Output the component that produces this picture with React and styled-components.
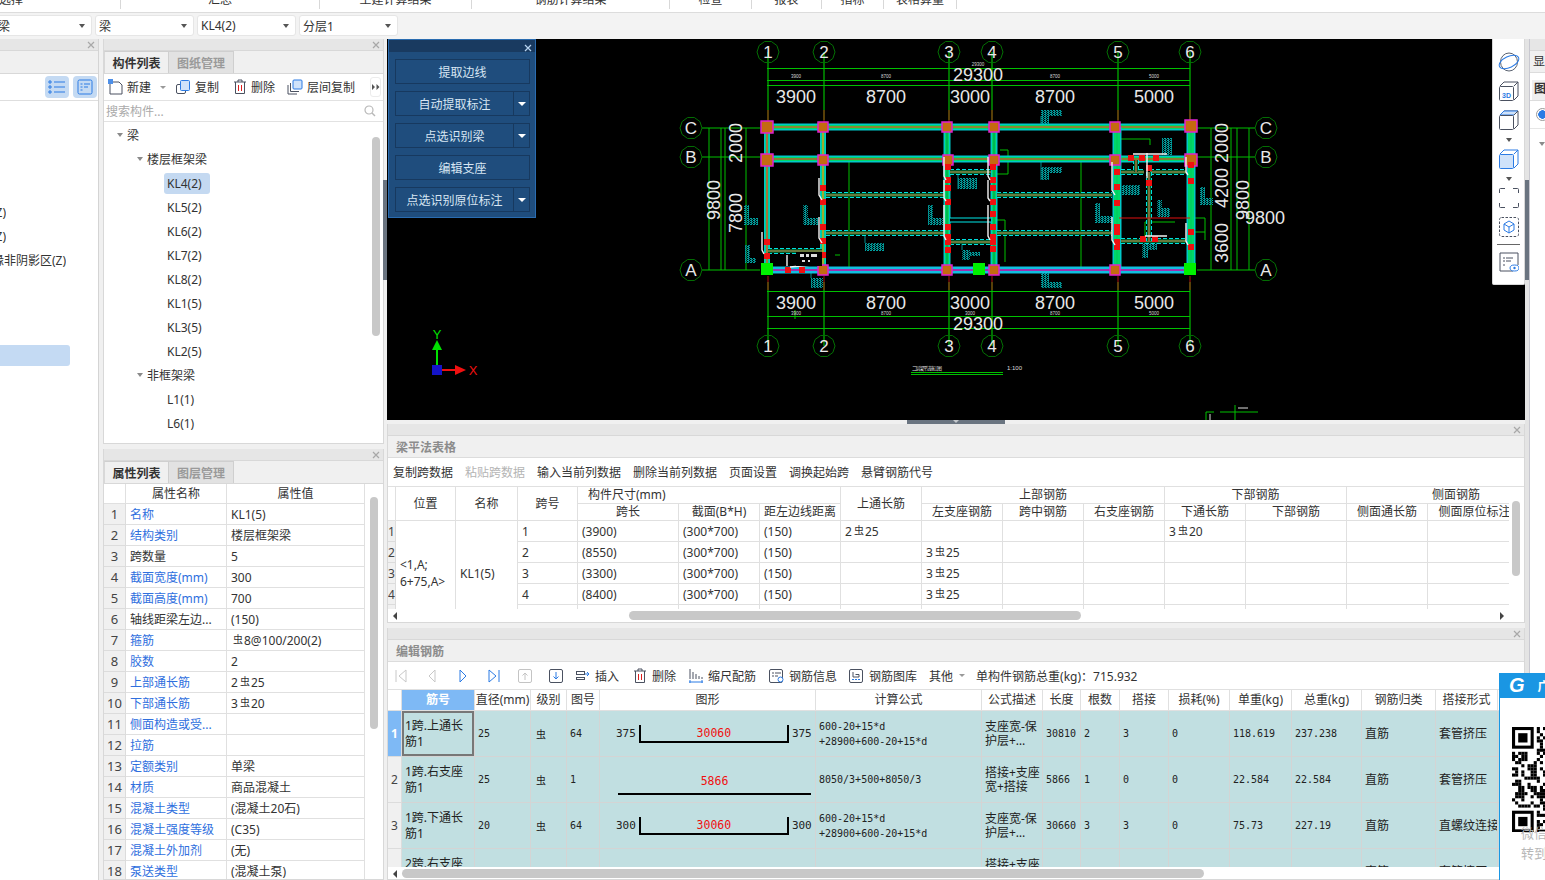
import React from "react";
import styled, { createGlobalStyle } from "styled-components";

const GlobalStyle = createGlobalStyle`
  html, body {
    margin: 0;
    padding: 0;
    background: #f0f0f0;
    overflow: hidden;
  }
  body {
    font-family: "Noto Sans", "Noto Sans CJK SC", sans-serif;
    font-size: 12px;
    color: #333;
  }
  * { box-sizing: border-box; }
`;

const MONO = `"DejaVu Sans Mono", "Noto Sans CJK SC", monospace`;

/* ---------- tiny drawings ---------- */
const CloseX = ({ c = "#a8a8a8" }) => (
  <svg width="8" height="8" viewBox="0 0 8 8">
    <path d="M1 1l6 6M7 1L1 7" stroke={c} strokeWidth="1.2" fill="none" />
  </svg>
);
const Ico = ({ children, w = 16, h = 16 }) => (
  <svg width={w} height={h} viewBox={`0 0 ${w} ${h}`} fill="none">
    {children}
  </svg>
);
const NewIcon = () => (
  <Ico>
    <path d="M3 3h8l3 3v9H2V5" stroke="#4a5160" strokeWidth="1" />
    <rect x="0" y="0" width="5" height="5" fill="#4d8fe8" />
  </Ico>
);
const CopyIcon = () => (
  <Ico>
    <rect x="1.5" y="5.5" width="9" height="9" rx="1.5" stroke="#4a5160" />
    <rect x="5.5" y="1.5" width="9" height="10" rx="1" fill="#cfe2fa" stroke="#2b7be4" />
  </Ico>
);
const TrashIcon = () => (
  <Ico w={14}>
    <path d="M1 3h12M5 3V1h4v2M2.5 3v11.5h9V3" stroke="#4a5160" />
    <path d="M5.5 6v6M8.5 6v6" stroke="#e02020" />
  </Ico>
);
const LayerCopyIcon = () => (
  <Ico>
    <path d="M1 6v9h9M3.5 4v8.5H12" stroke="#4a5160" />
    <rect x="6" y="1" width="9" height="9" rx="1" fill="#cfe2fa" stroke="#2b7be4" />
  </Ico>
);
const ListIcon = () => (
  <Ico w={18} h={14}>
    <path d="M6 2h11M6 7h11M6 12h11" stroke="#2b7be4" />
    <path d="M1 1h2v2H1zM1 6h2v2H1zM1 11h2v2H1z" stroke="#2b7be4" />
  </Ico>
);
const FormIcon = () => (
  <Ico w={16} h={16}>
    <rect x="1" y="1" width="14" height="14" rx="1.5" stroke="#2b7be4" />
    <path d="M3.5 5h2M7 5h6M3.5 8h2M7 8h4M3.5 11h2" stroke="#2b7be4" />
  </Ico>
);
const SearchIcon = () => (
  <Ico w={12} h={12}>
    <circle cx="5" cy="5" r="4" stroke="#b8b8b8" strokeWidth="1.2" />
    <path d="M8 8l3 3" stroke="#b8b8b8" strokeWidth="1.4" />
  </Ico>
);
const MoreIcon = () => (
  <Ico w={8} h={6}>
    <path d="M0 0l3 3-3 3zM4.5 0l3 3-3 3z" fill="#555" />
  </Ico>
);

const NavFirst = ({ c }) => (
  <Ico w={14}>
    <path d="M2 2v12M12 2L5 8l7 6z" stroke={c} />
  </Ico>
);
const NavPrev = ({ c }) => (
  <Ico w={14}>
    <path d="M10 2L4 8l6 6z" stroke={c} />
  </Ico>
);
const NavNext = ({ c }) => (
  <Ico w={14}>
    <path d="M4 2l6 6-6 6z" stroke={c} />
  </Ico>
);
const NavLast = ({ c }) => (
  <Ico w={14}>
    <path d="M12 2v12M2 2l7 6-7 6z" stroke={c} />
  </Ico>
);
const BoxArrow = ({ c, up }) => (
  <Ico w={14}>
    <rect x="0.5" y="1.5" width="13" height="13" rx="1.5" stroke={up ? "#c4c4c4" : "#4a5160"} />
    <path d={up ? "M7 12V5M4.5 7.5L7 5l2.5 2.5" : "M7 4v7M4.5 8.5L7 11l2.5-2.5"} stroke={c} />
  </Ico>
);
const InsertIcon = () => (
  <Ico w={14}>
    <rect x="0.5" y="3.5" width="8" height="3" stroke="#4a5160" />
    <rect x="0.5" y="9.5" width="8" height="2" stroke="#4a5160" />
    <path d="M9 6h4M11 4l2 2-2 2" stroke="#2b7be4" />
  </Ico>
);
const ScaleIcon = () => (
  <Ico w={14}>
    <path d="M1 1v10M4 4v7M7 6v5M10 8v3M13 9v2" stroke="#4a5160" />
    <path d="M0 14h14M1 12v3M13 12v3" stroke="#2b7be4" />
  </Ico>
);
const InfoIcon = () => (
  <Ico w={15}>
    <rect x="0.5" y="1.5" width="13" height="13" rx="1.5" stroke="#4a5160" />
    <path d="M3 5h2M6 5h6M3 8h2M6 8h3" stroke="#4a5160" />
    <circle cx="11.5" cy="11.5" r="2.5" fill="#fff" stroke="#2b7be4" />
  </Ico>
);
const LibIcon = () => (
  <Ico w={15}>
    <rect x="0.5" y="1.5" width="13" height="13" rx="1.5" stroke="#4a5160" />
    <path d="M4 4v5h6V6.5H6.5" stroke="#4a5160" />
    <path d="M3 11.5h8" stroke="#2b7be4" strokeDasharray="2 1" />
  </Ico>
);

/* ---------- shell ---------- */
const Page = styled.div`
  position: relative;
  width: 1545px;
  height: 880px;
  overflow: hidden;
  display: flex;
  flex-direction: column;
  background: #f0f0f0;
`;
const TopNav = styled.div`
  height: 13px;
  display: flex;
  background: #fff;
  border-bottom: 1px solid #dcdcdc;
  overflow: hidden;
`;
const NavTab = styled.div`
  width: ${(p) => p.$w}px;
  flex: none;
  height: 9px;
  padding-right: ${(p) => p.$pr ?? 0}px;
  border-right: 1px solid #d8d8d8;
  display: flex;
  justify-content: center;
  overflow: hidden;
  span {
    display: block;
    margin-top: -7px;
    line-height: 14px;
    white-space: nowrap;
  }
`;
const SelectBar = styled.div`
  height: 26px;
  display: flex;
  gap: 3px;
  padding-top: 2px;
  background: #f3f3f3;
`;
const Select = styled.div`
  width: ${(p) => p.$w}px;
  height: 21px;
  margin-left: ${(p) => p.$ml ?? 0}px;
  padding: 0 6px 0 3px;
  display: flex;
  align-items: center;
  justify-content: space-between;
  background: #fff;
  border: 1px solid #e6e6e6;
  border-radius: 3px;
  font-size: 12px;
  &::after {
    content: "";
    border-top: 4px solid #555;
    border-left: 3px solid transparent;
    border-right: 3px solid transparent;
  }
`;
const Work = styled.div`
  flex: 1;
  min-height: 0;
  display: flex;
`;
const LeftPanel = styled.div`
  width: 99px;
  flex: none;
  margin-right: 4px;
  display: flex;
  flex-direction: column;
  background: #fff;
  border-right: 1px solid #d4d4d4;
`;
const MidColumn = styled.div`
  width: 281px;
  flex: none;
  margin-right: 3px;
  display: flex;
  flex-direction: column;
  gap: 5px;
`;
const Panel = styled.div`
  display: flex;
  flex-direction: column;
  margin-top: ${(p) => p.$mt ?? 0}px;
  background: #fff;
  border: 1px solid #d8d8d8;
  border-top: none;
  overflow: hidden;
  height: ${(p) => p.$h}px;
  flex: ${(p) => (p.$h ? "none" : "1")};
`;
const PanelHead = styled.div`
  height: 12px;
  flex: none;
  display: flex;
  align-items: center;
  justify-content: flex-end;
  padding-right: 3px;
  background: #e6e6e6;
  border-bottom: 1px solid #d8d8d8;
`;
const TabStrip = styled.div`
  height: 23px;
  flex: none;
  display: flex;
  background: #f0f0f0;
  border-bottom: 1px solid #d8d8d8;
`;
const Tab = styled.div`
  width: 65px;
  display: flex;
  align-items: center;
  justify-content: center;
  font-weight: 700;
  color: ${(p) => (p.$active ? "#333" : "#9a9a9a")};
  background: ${(p) => (p.$active ? "#f0f0f0" : "#e2e2e2")};
  border: 1px solid #cfcfcf;
  border-left: ${(p) => (p.$active ? "1px solid #d8d8d8" : "none")};
  border-bottom: none;
`;
const ListBar = styled.div`
  height: 27px;
  flex: none;
  display: flex;
  align-items: center;
  padding-left: 4px;
  background: #fff;
  border-bottom: 1px solid #e2e2e2;
`;
const Tool = styled.div`
  display: flex;
  align-items: center;
  gap: ${(p) => p.$gap ?? 4}px;
  margin-right: ${(p) => p.$mr ?? 0}px;
  white-space: nowrap;
  color: ${(p) => (p.$dim ? "#b4b4b4" : "#333")};
`;
const Caret = styled.i`
  display: block;
  margin: 0 ${(p) => p.$mr ?? 0}px 0 ${(p) => p.$ml ?? 0}px;
  border-top: 3px solid #999;
  border-left: 3px solid transparent;
  border-right: 3px solid transparent;
`;
const MoreBtn = styled.div`
  width: 11px;
  height: 20px;
  flex: none;
  margin-left: 15px;
  display: flex;
  align-items: center;
  justify-content: center;
  border: 1px solid #ececec;
  border-radius: 3px;
`;
const SearchRow = styled.div`
  height: 21px;
  flex: none;
  display: flex;
  align-items: center;
  justify-content: space-between;
  padding: 0 7px 0 2px;
  color: #aaa;
  border-bottom: 1px solid #e2e2e2;
`;
const TreeArea = styled.div`
  position: relative;
  flex: 1;
  padding-top: 1px;
  overflow: hidden;
`;
const TreeRow = styled.div`
  height: 24px;
  display: flex;
  align-items: center;
  gap: 4px;
  padding-left: ${(p) => p.$pad}px;
  white-space: nowrap;
`;
const TreeArrow = styled.i`
  display: block;
  border-top: 4px solid #8a8a8a;
  border-left: 3.5px solid transparent;
  border-right: 3.5px solid transparent;
`;
const Leaf = styled.span`
  height: 21px;
  display: flex;
  align-items: center;
  padding: 0 8px 0 3px;
  border-radius: 3px;
  background: ${(p) => (p.$on ? "#c4d9f1" : "transparent")};
`;
const VScroll = styled.div`
  position: absolute;
  top: ${(p) => p.$top}px;
  right: ${(p) => p.$right}px;
  width: 8px;
  height: ${(p) => p.$h}px;
  background: #c8c8c8;
  border-radius: 4px;
`;
const LeftButtons = styled.div`
  height: 27px;
  flex: none;
  display: flex;
  align-items: flex-end;
  justify-content: flex-end;
  gap: 4px;
  padding: 0 1px 2px 0;
  border-bottom: 1px solid #dedede;
`;
const LeftBtn = styled.div`
  width: 24px;
  height: 22px;
  display: flex;
  align-items: center;
  justify-content: center;
  background: #c4daf3;
  border-radius: 4px;
`;
const LeftList = styled.div`
  padding-top: 100px;
  display: flex;
  flex-direction: column;
`;
const LeftRow = styled.div`
  width: ${(p) => p.$w}px;
  height: 24px;
  display: flex;
  align-items: center;
  justify-content: flex-end;
  white-space: nowrap;
  overflow: hidden;
  line-height: 24px;
`;
const LeftSelected = styled.div`
  width: 70px;
  height: 21px;
  margin-top: 72px;
  background: #c4daf3;
  border-radius: 0 3px 3px 0;
`;

/* ---------- tables ---------- */
const Grid = styled.table`
  table-layout: fixed;
  width: ${(p) => p.$w}px;
  border-collapse: separate;
  border-spacing: 0;
  font-size: 12px;
`;
const Th = styled.th`
  height: ${(p) => p.$h ?? 20}px;
  padding: 0 0 0 ${(p) => p.$pl ?? 0}px;
  line-height: 14px;
  font-weight: 400;
  text-align: ${(p) => (p.$pl ? "left" : "center")};
  color: #333;
  white-space: nowrap;
  overflow: hidden;
  background: ${(p) => (p.$active ? "#7eb9f5" : "#fff")};
  ${(p) => p.$active && "color:#fff;font-weight:700;"}
  border-right: 1px solid #e0e0e0;
  border-bottom: 1px solid #e0e0e0;
`;
const Gutter = styled.td`
  padding: 0;
  text-align: center;
  overflow: hidden;
  white-space: nowrap;
  font-size: ${(p) => p.$fs ?? 12}px;
  background: ${(p) => (p.$active ? "#7eb9f5" : "#f0f0f0")};
  color: ${(p) => (p.$active ? "#fff" : "#444")};
  font-weight: ${(p) => (p.$active ? 700 : 400)};
  border-right: 1px solid #dcdcdc;
  border-bottom: 1px solid #dcdcdc;
`;
const Td = styled.td`
  height: ${(p) => p.$h ?? 21}px;
  padding: 0 3px 0 4px;
  white-space: nowrap;
  overflow: hidden;
  text-overflow: ellipsis;
  color: ${(p) => (p.$link ? "#2f6fde" : "#333")};
  border-right: 1px solid #e0e0e0;
  border-bottom: 1px solid #e0e0e0;
`;
const Bar = styled.span`
  font-size: 10px;
  position: relative;
  top: -2px;
  margin: 0 1px 0 2px;
`;
const withBar = (s) => {
  if (!s.includes("虫")) return s;
  const [a, b] = s.split("虫");
  return (
    <>
      {a}
      <Bar>虫</Bar>
      {b}
    </>
  );
};

const PropsArea = styled.div`
  position: relative;
  flex: 1;
  overflow: hidden;
`;
const TitleBar = styled.div`
  height: 22px;
  flex: none;
  display: flex;
  align-items: center;
  padding-left: 8px;
  font-weight: 700;
  color: #8c8c8c;
  background: #f0f0f0;
  border-bottom: 1px solid #dcdcdc;
`;
const TextBar = styled.div`
  height: 29px;
  flex: none;
  display: flex;
  align-items: center;
  gap: 12px;
  padding-left: 5px;
  border-bottom: 1px solid #e0e0e0;
`;
const IconBar = styled.div`
  height: 28px;
  flex: none;
  display: flex;
  align-items: center;
  padding-left: 6px;
  border-bottom: 1px solid #e0e0e0;
`;
const NavButtons = styled.div`
  display: flex;
  gap: 17px;
  margin-right: 13px;
`;
const TableClip = styled.div`
  position: relative;
  height: ${(p) => p.$h}px;
  flex: none;
  overflow: hidden;
`;
const EdgeMask = styled.div`
  position: absolute;
  top: 0;
  right: 0;
  bottom: 0;
  width: 15px;
  background: #fff;
`;
const ScrollRow = styled.div`
  height: ${(p) => p.$h}px;
  flex: none;
  display: flex;
  align-items: center;
  padding: 0 20px 0 5px;
`;
const Thumb = styled.div`
  width: ${(p) => p.$w}px;
  height: 9px;
  margin-left: ${(p) => p.$ml}px;
  margin-right: auto;
  background: #c8c8c8;
  border-radius: 4.5px;
`;
const ArrowL = styled.i`
  display: block;
  border-right: 4px solid #444;
  border-top: 4px solid transparent;
  border-bottom: 4px solid transparent;
`;
const ArrowR = styled.i`
  display: block;
  border-left: 4px solid #444;
  border-top: 4px solid transparent;
  border-bottom: 4px solid transparent;
`;
const BarCol = styled.td`
  height: 46px;
  padding: 0 3px;
  line-height: ${(p) => p.$lh ?? 16}px;
  white-space: nowrap;
  overflow: hidden;
  font-family: ${(p) => (p.$mono ? MONO : "inherit")};
  font-size: ${(p) => (p.$mono ? "10px" : "12px")};
  color: #222;
  background: #c1dfe1;
  border-right: 1px solid #d4d4d4;
  border-bottom: 1px solid #d4d4d4;
  ${(p) => p.$sel && "box-shadow: inset 0 0 0 2px #777;"}
`;
const GradeCol = styled(BarCol)`
  padding-left: 5px;
  font-size: 10px;
`;
const ShapeCell = styled.div`
  display: flex;
  align-items: center;
  gap: 3px;
  padding-left: 13px;
  font-family: ${MONO};
  font-size: 11px;
`;
const Hook = styled.div`
  width: 150px;
  height: 18px;
  margin-top: 1px;
  display: flex;
  justify-content: center;
  line-height: 16px;
  color: #f01010;
  border: 2px solid #000;
  border-top: none;
  font-size: 11.5px;
`;
const Straight = styled.div`
  width: 193px;
  height: 22px;
  margin: 8px 0 0 2px;
  text-align: center;
  line-height: 16px;
  color: #f01010;
  border-bottom: 2px solid #000;
  font-size: 11.5px;
`;

/* ---------- canvas ---------- */
const Center = styled.div`
  width: 1138px;
  flex: none;
  display: flex;
  flex-direction: column;
`;
const Canvas = styled.div`
  position: relative;
  height: 381px;
  flex: none;
  margin-bottom: 4px;
  background: #000;
  svg.cad {
    display: block;
  }
`;
const BottomHandle = styled.div`
  position: absolute;
  left: 520px;
  bottom: -4px;
  width: 98px;
  height: 4px;
  display: flex;
  justify-content: center;
  background: #6a7480;
  &::after {
    content: "";
    border-top: 3px solid #c4c8cc;
    border-left: 3px solid transparent;
    border-right: 3px solid transparent;
  }
`;
const SideHandle = styled.div`
  position: absolute;
  ${(p) => p.$side}: -4px;
  top: 141px;
  width: 4px;
  height: 100px;
  background: #6a7480;
`;
const CadPanel = styled.div`
  position: absolute;
  left: 1px;
  top: 0;
  width: 148px;
  height: 179px;
  background: #1f4d7d;
  border: 1px solid #2a6cb0;
  display: flex;
  flex-direction: column;
`;
const CadHead = styled.div`
  height: 12px;
  flex: none;
  display: flex;
  align-items: center;
  justify-content: flex-end;
  padding: 3px 3px 0 0;
  background: #193a60;
`;
const CadBody = styled.div`
  display: flex;
  flex-direction: column;
  gap: 7px;
  padding: 7px 5px 0 6px;
`;
const CadRow = styled.div`
  height: 25px;
  display: flex;
  border: 1px solid #17395f;
  color: #d8e6f3;
`;
const CadLabel = styled.div`
  flex: 1;
  display: flex;
  align-items: center;
  justify-content: center;
`;
const CadDrop = styled.div`
  width: 16px;
  display: flex;
  align-items: center;
  justify-content: center;
  border-left: 1px solid #17395f;
  &::after {
    content: "";
    border-top: 4px solid #fff;
    border-left: 4px solid transparent;
    border-right: 4px solid transparent;
  }
`;
const Rail = styled.div`
  position: absolute;
  right: 0;
  top: 0;
  width: 33px;
  height: 246px;
  display: flex;
  flex-direction: column;
  align-items: center;
  padding-top: 13px;
  background: #fff;
  border: 1px solid #d8d8d8;
  border-top: none;
  border-radius: 0 0 2px 2px;
  svg {
    flex: none;
  }
`;
const RailCaret = styled.i`
  display: block;
  flex: none;
  margin: 8px 0 7px;
  border-top: 4px solid #555;
  border-left: 3.5px solid transparent;
  border-right: 3.5px solid transparent;
`;
const RailGap = styled.div`
  height: ${(p) => p.$h}px;
  flex: none;
`;
const RailLine = styled.div`
  width: 23px;
  height: 1px;
  flex: none;
  margin: 7px 0;
  background: #666;
`;

const RightPanel = styled.div`
  flex: 1;
  display: flex;
  flex-direction: column;
  background: #fff;
  border-left: 4px solid #e4e4e4;
  box-shadow: inset 1px 0 0 #c8c8d0;
  padding-left: 1px;
  overflow: hidden;
`;
const RightTitle = styled.div`
  height: 22px;
  flex: none;
  padding: 1px 0 0 3px;
  white-space: nowrap;
  line-height: 20px;
  background: #f0f0f0;
  border-bottom: 1px solid #dcdcdc;
`;
const RightTab = styled.div`
  height: 28px;
  flex: none;
  padding: 7px 0 0 2px;
  border-bottom: 1px solid #dcdcdc;
  span {
    display: block;
    height: 20px;
    padding-left: 2px;
    line-height: 18px;
    font-weight: 700;
    white-space: nowrap;
    background: #efefef;
  }
`;
const RightRadio = styled.div`
  height: 28px;
  flex: none;
  padding: 7px 0 0 6px;
  border-bottom: 1px solid #e6e6e6;
  i {
    display: block;
    width: 13px;
    height: 13px;
    border: 1px solid #999;
    border-radius: 50%;
    background: radial-gradient(circle, #2b7be4 0 4px, transparent 4.5px);
  }
`;
const RightArrow = styled.div`
  padding: 13px 0 0 9px;
`;

/* ---------- promo ---------- */
const Promo = styled.div`
  position: absolute;
  left: 1499px;
  top: 673px;
  width: 60px;
  height: 207px;
  background: #fff;
  border-left: 1px solid #1a96e3;
  overflow: hidden;
`;
const PromoHead = styled.div`
  height: 25px;
  display: flex;
  align-items: center;
  gap: 13px;
  padding-left: 9px;
  background: #1a96e3;
  color: #fff;
  font-weight: 700;
  white-space: nowrap;
  b {
    font-family: "Liberation Sans", sans-serif;
    font-style: italic;
    font-size: 20px;
  }
`;
const QrWrap = styled.div`
  position: relative;
  padding: 29px 0 0 12px;
`;
const PromoText = styled.div`
  position: absolute;
  left: 21px;
  top: 125px;
  line-height: 20px;
  font-size: 13px;
  color: #b8b8b8;
  white-space: nowrap;
`;

/* ---------- qr ---------- */
const QR = () => {
  const n = 34;
  const m = 3.1;
  const cells = [];
  let seed = 20231;
  for (let y = 0; y < n; y++) {
    for (let x = 0; x < n; x++) {
      seed = (seed * 16807) % 2147483647;
      const inF = (x < 8 && y < 8) || (x < 8 && y > n - 9);
      if (!inF && seed % 100 < 52) cells.push(<rect key={`${x}-${y}`} x={x * m} y={y * m} width={m} height={m} fill="#000" />);
    }
  }
  const finder = (x, y) => (
    <g key={`f${y}`}>
      <rect x={x} y={y} width={7 * m} height={7 * m} fill="#000" />
      <rect x={x + m} y={y + m} width={5 * m} height={5 * m} fill="#fff" />
      <rect x={x + 2 * m} y={y + 2 * m} width={3 * m} height={3 * m} fill="#000" />
    </g>
  );
  return (
    <svg width={n * m} height={n * m}>
      {cells}
      {finder(0, 0)}
      {finder(0, (n - 7) * m)}
    </svg>
  );
};

/* ---------- cad drawing ---------- */
const AXES = [
  [768, "1"],
  [824, "2"],
  [949, "3"],
  [992, "4"],
  [1118, "5"],
  [1190, "6"],
];
const ROWS = [
  [128, "C"],
  [157, "B"],
  [270, "A"],
];
const SPANS = [
  [796, "3900"],
  [886, "8700"],
  [970, "3000"],
  [1055, "8700"],
  [1154, "5000"],
];
const BLOBS = [
  [1041, 110, 21, 6],
  [1041, 110, 8, 14],
  [803, 205, 5, 20],
  [803, 218, 15, 7],
  [865, 243, 19, 8],
  [958, 178, 19, 11],
  [928, 205, 5, 20],
  [928, 218, 15, 7],
  [962, 250, 8, 10],
  [962, 252, 18, 4],
  [1041, 167, 21, 6],
  [1041, 167, 8, 13],
  [1095, 203, 5, 20],
  [1095, 216, 17, 7],
  [1122, 185, 18, 10],
  [1157, 200, 5, 17],
  [1157, 208, 13, 9],
  [1162, 138, 10, 17],
  [1200, 187, 5, 18],
  [1200, 198, 13, 7],
  [1142, 242, 15, 8],
  [1142, 242, 6, 16],
  [744, 205, 5, 20],
  [744, 218, 14, 7],
  [745, 245, 5, 18],
  [745, 258, 11, 5],
  [811, 278, 12, 10],
  [1041, 272, 8, 16],
  [1041, 282, 21, 6],
];
const RED = [
  ...[188, 202, 227, 241, 255].map((y) => [823, y]),
  ...[167, 180, 188, 202, 227, 237, 242, 250].map((y) => [948, y]),
  ...[167, 180, 188, 202, 214, 227, 237, 242, 249].map((y) => [993, y]),
  [767, 242],
  [767, 256],
  [788, 270],
  [802, 270],
  ...[172, 187, 203, 227, 232, 242, 247].map((y) => [1117, y]),
  ...[165, 181, 232, 247].map((y) => [1191, y]),
  [1131, 158],
  [1142, 158],
  [1156, 158],
  [1143, 239],
  [1155, 239],
  [1149, 168],
  [1149, 183],
];
const COLS = [
  [767, 127, 12],
  [823, 127, 10],
  [947, 127, 10],
  [994, 127, 10],
  [1115, 127, 10],
  [1191, 126, 12],
  [767, 160, 12],
  [823, 160, 10],
  [948, 160, 10],
  [994, 160, 10],
  [1115, 160, 10],
  [1191, 160, 12],
  [823, 270, 10],
  [947, 270, 10],
  [994, 270, 10],
  [1115, 270, 10],
];
const WHITE = [
  "M819 178V195L822 200",
  "M819 217V238L822 243",
  "M944 157V176L946 180",
  "M944 180V198L946 201",
  "M944 205V236L946 240",
  "M988 157V176L990 180",
  "M988 180V198L990 201",
  "M988 205V236L990 240",
  "M762 232V250L764 254",
  "M787 255V266M790 267L812 265",
  "M1112 162V190L1115 195",
  "M1112 217V240L1115 245",
  "M1186 157V172L1188 175",
  "M1186 223V241L1188 245",
  "M1133 154H1167M1147 153V178",
  "M1145 236H1167",
];

const Beam = ({ d, w = 7, o = "#c06a20", core = "#00d868" }) => (
  <g fill="none">
    <path d={d} stroke="#00c8c8" strokeWidth={w} />
    <path d={d} stroke={core} strokeWidth={w - 3} />
    <path d={d} stroke={o} strokeWidth="1.6" />
  </g>
);
const DashBeam = ({ d, o = "#d0402a" }) => (
  <g fill="none">
    <path d={d} stroke="#00e0e0" strokeWidth="6" strokeDasharray="4 2" />
    <path d={d} stroke="#000" strokeWidth="4" />
    <path d={d} stroke="#00b050" strokeWidth="3" />
    <path d={d} stroke={o} strokeWidth="1.2" />
  </g>
);
const Vert = ({ x, y, t, fs = 18 }) => (
  <text x={x} y={y} fontSize={fs} textAnchor="middle" fill="#e8e8e8" fontFamily="Liberation Sans, sans-serif" transform={`rotate(-90 ${x} ${y})`}>
    {t}
  </text>
);
const Bubble = ({ x, y, t }) => (
  <g>
    <polygon
      points={[...Array(10)].map((_, i) => `${x + 11 * Math.cos((i * Math.PI) / 5)},${y + 11 * Math.sin((i * Math.PI) / 5)}`).join(" ")}
      fill="none"
      stroke="#047004"
    />
    <text x={x} y={y + 6} fontSize="17" textAnchor="middle" fill="#e8e8e8" fontFamily="Liberation Sans, sans-serif">
      {t}
    </text>
  </g>
);
const Big = ({ x, y, t }) => (
  <text x={x} y={y} fontSize="18" textAnchor="middle" fill="#e8e8e8" fontFamily="Liberation Sans, sans-serif">
    {t}
  </text>
);
const Tiny = ({ x, y, t }) => (
  <text x={x} y={y} fontSize="4.5" textAnchor="middle" fill="#d8d8d8" fontFamily="Liberation Sans, sans-serif">
    {t}
  </text>
);

const CadDrawing = () => (
  <svg className="cad" width="1138" height="381" viewBox="387 39 1138 381">
    <defs>
      <pattern id="teal" width="3" height="2" patternUnits="userSpaceOnUse">
        <rect width="2" height="1" fill="#00a0a0" />
        <rect x="1" y="1" width="2" height="1" fill="#007f7f" />
      </pattern>
    </defs>

    {/* 轴线 */}
    {AXES.map(([x]) => (
      <g key={x}>
        <path d={`M${x} 52V120M${x} 282V346`} stroke="#00e000" />
        <path d={`M${x} 110V122M${x} 276V290`} stroke="#b01010" />
      </g>
    ))}
    {ROWS.map(([y]) => (
      <path key={y} d={`M702 ${y}H760M1197 ${y}H1255`} stroke="#00c000" />
    ))}

    {/* 标注线 */}
    <g stroke="#00c000" fill="none">
      <path d="M767 68.5H1190M767 80.5H1190M767 85.5H1190" />
      <path d="M767 291.5H1190M767 316.5H1190M767 328.5H1190" />
      <path d="M709 128V270M721 128V270M725 128V270M746 128V270" />
      <path d="M1211 128V270M1231 128V270M1237 128V270M1249 128V270" />
      <path d="M849 160V270M1081 160V270M835 255H840M795 310V319" />
      <path d="M1119 139H1150M1150 139V145M1145 240V222H1175M1195 218H1205V240M1191 232H1205" />
      <path d="M1000 150H1008V174M995 174H1008M995 220H1005V262" />
    </g>

    {BLOBS.map(([x, y, w, h], i) => (
      <rect key={i} x={x} y={y} width={w} height={h} fill="url(#teal)" />
    ))}
    <path d="M1041 116V126M1041 180V158M865 243V230M958 189V168M962 250V240M811 278V272M1041 272V268" stroke="#008c8c" />

    {/* 梁 */}
    <Beam d="M767 127H1191" />
    <Beam d="M767 159H1191" o="#b85a20" />
    <Beam d="M767 127V270" w={6} o="#d05a30" />
    <Beam d="M823 127V270" w={6} o="#c8a020" />
    <Beam d="M947 127V270" w={7} o="#00b050" />
    <Beam d="M994 127V270" w={7} o="#00b050" />
    <Beam d="M1117 127V270" w={9} o="#00d060" />
    <Beam d="M1191 127V270" w={9} o="#00d060" />
    <DashBeam d="M826 195H944M997 195H1112" />
    <DashBeam d="M826 233H944M997 233H1112" />
    <DashBeam d="M950 172H991M950 242H991" />
    <DashBeam d="M768 251H822" />
    <DashBeam d="M1121 172H1144M1150 172H1186M1121 241H1186" />
    <DashBeam d="M1149 172V241M1136 160V172" />
    <path d="M950 220H991" stroke="#00e8e8" strokeWidth="5" fill="none" />
    <path d="M950 220H991" stroke="#000" strokeWidth="3" fill="none" />
    <path d="M1119 218H1190" stroke="#e01010" strokeWidth="1.2" fill="none" />

    {/* A 轴梁 */}
    <path d="M767 270H1191" stroke="#10c0e0" strokeWidth="7" fill="none" />
    <path d="M767 270H1191" stroke="#a030b0" strokeWidth="2" fill="none" />

    {COLS.map(([x, y, s], i) => (
      <rect key={i} x={x - s / 2} y={y - s / 2} width={s} height={s} fill="#c46a10" stroke="#e020d0" strokeWidth="1.5" />
    ))}
    {[
      [767, 269],
      [979, 269],
      [1190, 269],
    ].map(([x, y]) => (
      <rect key={x} x={x - 6} y={y - 6} width="12" height="12" fill="#00f000" />
    ))}
    {RED.map(([x, y], i) => (
      <rect key={i} x={x - 3} y={y - 3} width="6" height="6" fill="#f01010" />
    ))}
    <path d={WHITE.join("")} stroke="#f4f4f4" strokeWidth="1.4" fill="none" />
    <rect x="796" y="252" width="26" height="14" fill="#000" />
    <g fill="#ddd">
      <rect x="800" y="254" width="4" height="3" />
      <rect x="806" y="254" width="3" height="3" />
      <rect x="811" y="254" width="6" height="3" />
      <rect x="802" y="260" width="3" height="2" />
      <rect x="808" y="260" width="2" height="2" />
    </g>

    {/* 尺寸文字 */}
    {SPANS.map(([x, t], i) => (
      <g key={i}>
        <Big x={x} y={103} t={t} />
        <Big x={x} y={309} t={t} />
        {i !== 2 && <Tiny x={x} y={78} t={t} />}
        <Tiny x={x} y={315} t={t} />
      </g>
    ))}
    <Big x={978} y={81} t="29300" />
    <Big x={978} y={330} t="29300" />
    <Tiny x={978} y={66} t="29300" />
    <Vert x={742} y={143} t="2000" />
    <Vert x={742} y={213} t="7800" />
    <Vert x={720} y={200} t="9800" />
    <Vert x={1228} y={143} t="2000" />
    <Vert x={1228} y={188} t="4200" />
    <Vert x={1228} y={243} t="3600" />
    <Vert x={1249} y={200} t="9800" />
    <Big x={1265} y={224} t="9800" />

    {AXES.map(([x, t]) => (
      <g key={t}>
        <Bubble x={x} y={52} t={t} />
        <Bubble x={x} y={346} t={t} />
      </g>
    ))}
    {ROWS.map(([y, t]) => (
      <g key={t}>
        <Bubble x={691} y={y} t={t} />
        <Bubble x={1266} y={y} t={t} />
      </g>
    ))}

    {/* 图名 */}
    <text x="912" y="370" fontSize="5" fill="#ddd" fontFamily="Noto Sans CJK SC, sans-serif" textLength="30">
      二层梁平法施工图
    </text>
    <text x="1007" y="370" fontSize="6" fill="#ddd" fontFamily="Liberation Sans, sans-serif">
      1:100
    </text>
    <path d="M911 372.5H1003M911 374.5H1003" stroke="#00c000" fill="none" />

    {/* 右下角图例 */}
    <path d="M1206 420V412H1214M1235 405V420M1220 412H1258" stroke="#00c000" fill="none" />
    <path d="M1210 414V420M1238 408H1248" stroke="#ddd" fill="none" />

    {/* 坐标系 */}
    <path d="M437 370V346" stroke="#00e000" strokeWidth="2" />
    <path d="M432 350L437 340L442 350Z" fill="#00e000" />
    <path d="M437 370H457" stroke="#f01010" strokeWidth="2" />
    <path d="M455 365L466 370L455 375Z" fill="#f01010" />
    <rect x="432" y="365" width="10" height="10" fill="#1414c8" />
    <text x="437" y="339" fontSize="13" textAnchor="middle" fill="#00e000" fontFamily="Liberation Sans, sans-serif">
      Y
    </text>
    <text x="473" y="375" fontSize="13" textAnchor="middle" fill="#f01010" fontFamily="Liberation Sans, sans-serif">
      X
    </text>
  </svg>
);

/* ---------- rail icons ---------- */
const Orbit = () => (
  <svg width="22" height="20" viewBox="0 0 22 20" fill="none">
    <ellipse cx="11" cy="10" rx="8.5" ry="9" stroke="#5a6270" />
    <ellipse cx="11" cy="10" rx="10.5" ry="5.5" transform="rotate(-25 11 10)" stroke="#2b7be4" />
  </svg>
);
const Cube = ({ top, front, label, stroke = "#4a5160" }) => (
  <svg width="20" height="20" viewBox="0 0 20 20" fill="none">
    <path d="M1 5L5 1H19V15L15 19" stroke={stroke} />
    {top && <path d="M1 5L5 1H19L15 5Z" fill="#cfe2fa" stroke="#2b7be4" />}
    <rect x="0.5" y="5.5" width="14" height="14" rx="1" stroke={stroke} fill={front ? "#cfe2fa" : "none"} />
    <path d="M15 5L19 1" stroke={stroke} />
    {label && (
      <text x="7.5" y="17" fontSize="7" fontWeight="700" textAnchor="middle" fill="#2b7be4" fontFamily="Liberation Sans, sans-serif">
        3D
      </text>
    )}
  </svg>
);
const Corners = () => (
  <svg width="20" height="20" viewBox="0 0 20 20" fill="none" stroke="#4a5160">
    <path d="M.5 5V1.5a1 1 0 011-1H6M14 .5h4.5a1 1 0 011 1V5M19.5 15v3.5a1 1 0 01-1 1H14M6 19.5H1.5a1 1 0 01-1-1V15" />
  </svg>
);
const DashedBox = () => (
  <svg width="20" height="20" viewBox="0 0 20 20" fill="none">
    <rect x="0.5" y="0.5" width="19" height="19" rx="2" stroke="#4a5160" strokeDasharray="2.5 1.5" />
    <path d="M10 4l5 3v6l-5 3-5-3V7zM5 7l5 3 5-3M10 10v6" stroke="#2b7be4" />
  </svg>
);
const DocEye = () => (
  <svg width="20" height="20" viewBox="0 0 20 20" fill="none">
    <path d="M14 19H1V1h18v12" stroke="#4a5160" />
    <path d="M4 6h2M7 6h7M4 9h2M7 9h5M4 13h2" stroke="#4a5160" />
    <ellipse cx="15.5" cy="16" rx="4.5" ry="3" fill="#fff" stroke="#2b7be4" />
    <circle cx="15.5" cy="16" r="1.2" fill="#2b7be4" />
  </svg>
);

/* ---------- data ---------- */
const TREE = ["KL5(2)", "KL6(2)", "KL7(2)", "KL8(2)", "KL1(5)", "KL3(5)", "KL2(5)"];
const PROPS = [
  ["名称", "KL1(5)", 1],
  ["结构类别", "楼层框架梁", 1],
  ["跨数量", "5", 0],
  ["截面宽度(mm)", "300", 1],
  ["截面高度(mm)", "700", 1],
  ["轴线距梁左边...", "(150)", 0],
  ["箍筋", "虫8@100/200(2)", 1],
  ["胶数", "2", 1],
  ["上部通长筋", "2虫25", 1],
  ["下部通长筋", "3虫20", 1],
  ["侧面构造或受...", "", 1],
  ["拉筋", "", 1],
  ["定额类别", "单梁", 1],
  ["材质", "商品混凝土", 1],
  ["混凝土类型", "(混凝土20石)", 1],
  ["混凝土强度等级", "(C35)", 1],
  ["混凝土外加剂", "(无)", 1],
  ["泵送类型", "(混凝土泵)", 1],
];
const SPAN_ROWS = [
  ["1", "(3900)", "2虫25", "", "3虫20"],
  ["2", "(8550)", "", "3虫25", ""],
  ["3", "(3300)", "", "3虫25", ""],
  ["4", "(8400)", "", "3虫25", ""],
  ["5", "", "", "", ""],
];
const BEAM_COLS = [8, 60, 62, 60, 101, 81, 81, 81, 81, 81, 81, 81, 101, 81, 94];
const REBAR_COLS = [14, 73, 56, 36, 33, 216, 166, 61, 38, 39, 49, 61, 62, 70, 74, 62, 40];
const REBAR_HEAD = ["筋号", "直径(mm)", "级别", "图号", "图形", "计算公式", "公式描述", "长度", "根数", "搭接", "损耗(%)", "单重(kg)", "总重(kg)", "钢筋归类", "搭接形式", ""];
const DESC_A = (
  <>
    支座宽-保
    <br />
    护层+…
  </>
);
const DESC_B = (
  <>
    搭接+支座
    <br />
    宽+搭接
  </>
);
const F64 = (
  <>
    600-20+15*d
    <br />
    +28900+600-20+15*d
  </>
);
const REBAR_ROWS = [
  { no: "1", name: ["1跨.上通长", "筋1"], d: "25", fig: "64", l: "375", v: "30060", f: F64, desc: DESC_A, len: "30810", n: "2", lap: "3", unit: "118.619", total: "237.238", form: "套管挤压" },
  { no: "2", name: ["1跨.右支座", "筋1"], d: "25", fig: "1", v: "5866", f: "8050/3+500+8050/3", desc: DESC_B, len: "5866", n: "1", lap: "0", unit: "22.584", total: "22.584", form: "套管挤压" },
  { no: "3", name: ["1跨.下通长", "筋1"], d: "20", fig: "64", l: "300", v: "30060", f: F64, desc: DESC_A, len: "30660", n: "3", lap: "3", unit: "75.73", total: "227.19", form: "直螺纹连接" },
  { no: "4", name: ["2跨.右支座", "筋1"], d: "25", fig: "1", v: "9449", f: "8050/3+500+8900+700+5000/3", desc: DESC_B, len: "9449", n: "1", lap: "0", unit: "36.385", total: "36.385", form: "套管挤压" },
];

const Props = () => (
  <Panel>
    <PanelHead>
      <CloseX />
    </PanelHead>
    <TabStrip>
      <Tab $active>属性列表</Tab>
      <Tab>图层管理</Tab>
    </TabStrip>
    <PropsArea>
      <Grid $w={261}>
        <colgroup>
          <col width="22" />
          <col width="101" />
          <col width="138" />
        </colgroup>
        <thead>
          <tr>
            <Th />
            <Th>属性名称</Th>
            <Th>属性值</Th>
          </tr>
        </thead>
        <tbody>
          {PROPS.map(([k, v, link], i) => (
            <tr key={k}>
              <Gutter $fs={13}>{i + 1}</Gutter>
              <Td $link={!!link}>{k}</Td>
              <Td>{withBar(v)}</Td>
            </tr>
          ))}
        </tbody>
      </Grid>
      <VScroll $top={13} $right={5} $h={232} />
    </PropsArea>
  </Panel>
);

const BeamTable = () => (
  <Grid $w={1134}>
    <colgroup>
      {BEAM_COLS.map((w, i) => (
        <col key={i} width={w} />
      ))}
    </colgroup>
    <thead>
      <tr>
        <Th rowSpan="2" $h={17} />
        <Th rowSpan="2" $h={17}>位置</Th>
        <Th rowSpan="2" $h={17}>名称</Th>
        <Th rowSpan="2" $h={17}>跨号</Th>
        <Th colSpan="3" $h={17} $pl={10}>构件尺寸(mm)</Th>
        <Th rowSpan="2" $h={17}>上通长筋</Th>
        <Th colSpan="3" $h={17}>上部钢筋</Th>
        <Th colSpan="2" $h={17}>下部钢筋</Th>
        <Th colSpan="2" $h={17} $pl={85}>侧面钢筋</Th>
      </tr>
      <tr>
        {["跨长", "截面(B*H)", "距左边线距离", "左支座钢筋", "跨中钢筋", "右支座钢筋", "下通长筋", "下部钢筋", "侧面通长筋", "侧面原位标注"].map((t) => (
          <Th key={t} $h={17}>{t}</Th>
        ))}
      </tr>
    </thead>
    <tbody>
      {SPAN_ROWS.map(([no, len, top, left, low], i) => (
        <tr key={no}>
          <Gutter>{no}</Gutter>
          {i === 0 && (
            <>
              <Td rowSpan="5">
                &lt;1,A;
                <br />
                6+75,A&gt;
              </Td>
              <Td rowSpan="5">KL1(5)</Td>
            </>
          )}
          <Td>{no}</Td>
          <Td>{len}</Td>
          <Td>{len && "(300*700)"}</Td>
          <Td>{len && "(150)"}</Td>
          <Td>{withBar(top)}</Td>
          <Td>{withBar(left)}</Td>
          <Td />
          <Td />
          <Td>{withBar(low)}</Td>
          <Td />
          <Td />
          <Td />
        </tr>
      ))}
    </tbody>
  </Grid>
);

const Shape = ({ r }) =>
  r.l ? (
    <ShapeCell>
      {r.l}
      <Hook>{r.v}</Hook>
      {r.l}
    </ShapeCell>
  ) : (
    <ShapeCell>
      <Straight>{r.v}</Straight>
    </ShapeCell>
  );

const RebarTable = () => (
  <Grid $w={1150}>
    <colgroup>
      {REBAR_COLS.map((w, i) => (
        <col key={i} width={w} />
      ))}
    </colgroup>
    <thead>
      <tr>
        <Th $h={21} />
        {REBAR_HEAD.map((t, i) => (
          <Th key={i} $h={21} $active={i === 0}>{t}</Th>
        ))}
      </tr>
    </thead>
    <tbody>
      {REBAR_ROWS.map((r, i) => (
        <tr key={r.no}>
          <Gutter $active={i === 0}>{r.no}</Gutter>
          <BarCol $sel={i === 0}>
            {r.name[0]}
            <br />
            {r.name[1]}
          </BarCol>
          <BarCol $mono>{r.d}</BarCol>
          <GradeCol>虫</GradeCol>
          <BarCol $mono>{r.fig}</BarCol>
          <BarCol>
            <Shape r={r} />
          </BarCol>
          <BarCol $mono $lh={15}>{r.f}</BarCol>
          <BarCol $lh={14}>{r.desc}</BarCol>
          <BarCol $mono>{r.len}</BarCol>
          <BarCol $mono>{r.n}</BarCol>
          <BarCol $mono>{r.lap}</BarCol>
          <BarCol $mono>0</BarCol>
          <BarCol $mono>{r.unit}</BarCol>
          <BarCol $mono>{r.total}</BarCol>
          <BarCol>直筋</BarCol>
          <BarCol>{r.form}</BarCol>
          <BarCol />
        </tr>
      ))}
    </tbody>
  </Grid>
);

export default function App() {
  return (
    <Page>
      <GlobalStyle />
      <TopNav>
        <NavTab $w={121} $pr={98}>
          <span>选择</span>
        </NavTab>
        {[
          [199, "汇总"],
          [152, "土建计算结果"],
          [198, "钢筋计算结果"],
          [82, "检查"],
          [70, "报表"],
          [62, "指标"],
          [73, "表格算量"],
        ].map(([w, t]) => (
          <NavTab key={t} $w={w}>
            <span>{t}</span>
          </NavTab>
        ))}
      </TopNav>
      <SelectBar>
        <Select $w={98} $ml={-6}>梁</Select>
        <Select $w={99}>梁</Select>
        <Select $w={99}>KL4(2)</Select>
        <Select $w={99}>分层1</Select>
      </SelectBar>

      <Work>
        <LeftPanel>
          <PanelHead>
            <CloseX />
          </PanelHead>
          <TabStrip />
          <LeftButtons>
            <LeftBtn>
              <ListIcon />
            </LeftBtn>
            <LeftBtn>
              <FormIcon />
            </LeftBtn>
          </LeftButtons>
          <LeftList>
            <LeftRow $w={6}>构造柱(Z)</LeftRow>
            <LeftRow $w={6}>砌体柱(Z)</LeftRow>
            <LeftRow $w={66}>约束边缘非阴影区(Z)</LeftRow>
            <LeftSelected />
          </LeftList>
        </LeftPanel>

        <MidColumn>
          <Panel $h={405}>
            <PanelHead>
              <CloseX />
            </PanelHead>
            <TabStrip>
              <Tab $active>构件列表</Tab>
              <Tab>图纸管理</Tab>
            </TabStrip>
            <ListBar>
              <Tool $gap={3}>
                <NewIcon />
                新建
                <Caret $ml={6} $mr={9} />
              </Tool>
              <Tool $gap={4} $mr={14}>
                <CopyIcon />
                复制
              </Tool>
              <Tool $gap={4} $mr={12}>
                <TrashIcon />
                删除
              </Tool>
              <Tool $gap={4}>
                <LayerCopyIcon />
                层间复制
              </Tool>
              <MoreBtn>
                <MoreIcon />
              </MoreBtn>
            </ListBar>
            <SearchRow>
              搜索构件...
              <SearchIcon />
            </SearchRow>
            <TreeArea>
              <TreeRow $pad={13}>
                <TreeArrow />梁
              </TreeRow>
              <TreeRow $pad={33}>
                <TreeArrow />楼层框架梁
              </TreeRow>
              <TreeRow $pad={60}>
                <Leaf $on>KL4(2)</Leaf>
              </TreeRow>
              {TREE.map((t) => (
                <TreeRow key={t} $pad={60}>
                  <Leaf>{t}</Leaf>
                </TreeRow>
              ))}
              <TreeRow $pad={33}>
                <TreeArrow />非框架梁
              </TreeRow>
              <TreeRow $pad={60}>
                <Leaf>L1(1)</Leaf>
              </TreeRow>
              <TreeRow $pad={60}>
                <Leaf>L6(1)</Leaf>
              </TreeRow>
              <VScroll $top={15} $right={3} $h={199} />
            </TreeArea>
          </Panel>
          <Props />
        </MidColumn>

        <Center>
          <Canvas>
            <CadDrawing />
            <SideHandle $side="left" />
            <SideHandle $side="right" />
            <BottomHandle />
            <CadPanel>
              <CadHead>
                <CloseX c="#b8d4f0" />
              </CadHead>
              <CadBody>
                {[
                  ["提取边线", 0],
                  ["自动提取标注", 1],
                  ["点选识别梁", 1],
                  ["编辑支座", 0],
                  ["点选识别原位标注", 1],
                ].map(([t, drop]) => (
                  <CadRow key={t}>
                    <CadLabel>{t}</CadLabel>
                    {!!drop && <CadDrop />}
                  </CadRow>
                ))}
              </CadBody>
            </CadPanel>
            <Rail>
              <Orbit />
              <RailGap $h={9} />
              <Cube label />
              <RailGap $h={9} />
              <Cube top />
              <RailCaret />
              <Cube front stroke="#2b7be4" />
              <RailCaret />
              <Corners />
              <RailGap $h={9} />
              <DashedBox />
              <RailLine />
              <DocEye />
            </Rail>
          </Canvas>

          <Panel $h={199}>
            <PanelHead>
              <CloseX />
            </PanelHead>
            <TitleBar>梁平法表格</TitleBar>
            <TextBar>
              <Tool>复制跨数据</Tool>
              <Tool $dim>粘贴跨数据</Tool>
              <Tool>输入当前列数据</Tool>
              <Tool>删除当前列数据</Tool>
              <Tool>页面设置</Tool>
              <Tool>调换起始跨</Tool>
              <Tool>悬臂钢筋代号</Tool>
            </TextBar>
            <TableClip $h={122}>
              <BeamTable />
              <EdgeMask>
                <VScroll $top={14} $right={4} $h={75} />
              </EdgeMask>
            </TableClip>
            <ScrollRow $h={13}>
              <ArrowL />
              <Thumb $w={452} $ml={232} />
              <ArrowR />
            </ScrollRow>
          </Panel>

          <Panel $h={252} $mt={5}>
            <PanelHead>
              <CloseX />
            </PanelHead>
            <TitleBar>编辑钢筋</TitleBar>
            <IconBar>
              <NavButtons>
                <NavFirst c="#c8c8c8" />
                <NavPrev c="#c8c8c8" />
                <NavNext c="#2b7be4" />
                <NavLast c="#2b7be4" />
                <BoxArrow c="#c4c4c4" up />
                <BoxArrow c="#2b7be4" />
              </NavButtons>
              <Tool $gap={5} $mr={14}>
                <InsertIcon />
                插入
              </Tool>
              <Tool $gap={5} $mr={13}>
                <TrashIcon />
                删除
              </Tool>
              <Tool $gap={5} $mr={13}>
                <ScaleIcon />
                缩尺配筋
              </Tool>
              <Tool $gap={5} $mr={12}>
                <InfoIcon />
                钢筋信息
              </Tool>
              <Tool $gap={5} $mr={12}>
                <LibIcon />
                钢筋图库
              </Tool>
              <Tool $gap={0}>
                其他
                <Caret $ml={6} $mr={11} />
              </Tool>
              <Tool>单构件钢筋总重(kg)：715.932</Tool>
            </IconBar>
            <TableClip $h={177}>
              <RebarTable />
            </TableClip>
            <ScrollRow $h={13}>
              <ArrowL />
              <Thumb $w={802} $ml={5} />
            </ScrollRow>
          </Panel>
        </Center>

        <RightPanel>
          <PanelHead />
          <RightTitle>显示设置</RightTitle>
          <RightTab>
            <span>图元显示</span>
          </RightTab>
          <RightRadio>
            <i />
          </RightRadio>
          <RightArrow>
            <TreeArrow />
          </RightArrow>
        </RightPanel>
      </Work>

      <Promo>
        <PromoHead>
          <b>G</b>广联达
        </PromoHead>
        <QrWrap>
          <QR />
          <PromoText>
            微信扫码
            <br />
            转到手机
          </PromoText>
        </QrWrap>
      </Promo>
    </Page>
  );
}
